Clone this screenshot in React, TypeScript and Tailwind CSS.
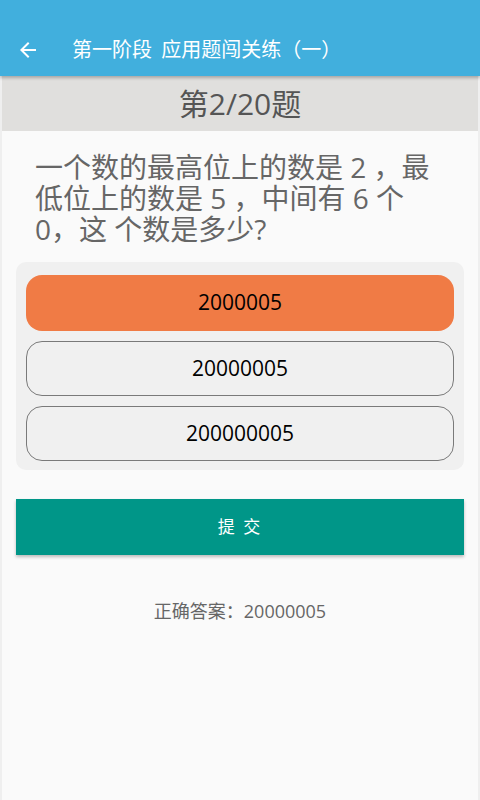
import React from "react";

const font = { fontFamily: '"Open Sans", "Noto Sans CJK SC", sans-serif' };

const options = ["2000005", "20000005", "200000005"];

export default function App() {
  const selected = 0;

  return (
    <div className="flex min-h-screen flex-col bg-[#fafafa] [text-spacing-trim:space-all]" style={font}>
      <header className="relative z-10 flex h-[76px] items-center bg-[#41afdd] pt-6 shadow-[0_2px_3px_rgba(0,0,0,0.25)]">
        <button type="button" className="ml-4 flex h-6 w-6 items-center justify-center text-white">
          <svg viewBox="0 0 24 24" className="h-6 w-6" fill="currentColor">
            <path d="M20 11H7.83l5.59-5.59L12 4l-8 8 8 8 1.41-1.41L7.83 13H20v-2z" />
          </svg>
        </button>
        <h1 className="ml-[32px] text-[20px] font-normal text-white [word-spacing:4px]">
          第一阶段 应用题闯关练（一）
        </h1>
      </header>

      <div className="flex flex-1 flex-col border-x-2 border-[#efefef]">
        <div className="flex h-[55px] items-center justify-center bg-[#e0dfdd]">
          <span className="text-[30px] leading-9 text-[#555555]">第2/20题</span>
        </div>

        <p className="mt-[21px] px-[33px] text-[28px] leading-[31px] text-[#666666]">
          一个数的最高位上的数是 2 ，最
          <br />
          低位上的数是 5 ，中间有 6 个
          <br />
          0，这 个数是多少?
        </p>

        <div className="mx-[14px] mt-[17px] flex flex-col gap-[10px] rounded-[10px] bg-[#f0f0f0] px-[10px] pb-[9px] pt-[13px]">
          {options.map((opt, i) => (
            <button
              key={opt}
              type="button"
              className={
                i === selected
                  ? "flex h-[56px] items-center justify-center rounded-[16px] bg-[#f07b45] text-[21px] text-black"
                  : "flex h-[55px] items-center justify-center rounded-[16px] border-[1.5px] border-[#7a7a7a] bg-[#f0f0f0] text-[21px] text-black"
              }
            >
              {opt}
            </button>
          ))}
        </div>

        <button
          type="button"
          className="mx-[14px] mt-[29px] h-[56px] bg-[#009688] text-[17px] tracking-[2px] text-white shadow-[0_2px_3px_rgba(0,0,0,0.25)]"
        >
          提 交
        </button>

        <p className="mt-[44px] text-center text-[18px] leading-6 text-[#666666]">
          正确答案：20000005
        </p>
      </div>
    </div>
  );
}
